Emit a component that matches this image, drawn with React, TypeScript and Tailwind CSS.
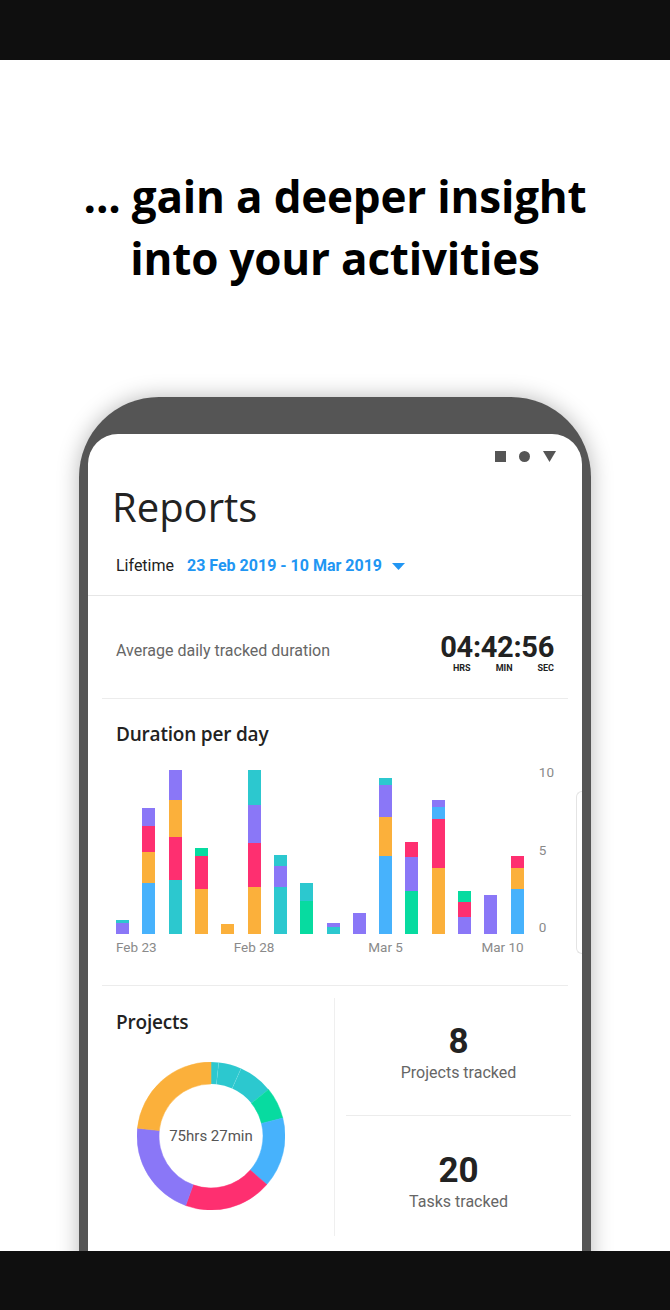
const colors: Record<string, string> = {
  p: "#8a77f7",
  t: "#2cc8cf",
  b: "#47b2fc",
  o: "#fbb03b",
  k: "#fe2f70",
  g: "#07dba0",
};

// each bar: segments from bottom to top, heights in px
const bars: [string, number][][] = [
  [["p", 11], ["t", 3]],
  [["b", 51], ["o", 31], ["k", 26], ["p", 18]],
  [["t", 54], ["k", 43], ["o", 37], ["p", 30]],
  [["o", 45], ["k", 33], ["g", 8]],
  [["o", 10]],
  [["o", 47], ["k", 44], ["p", 38], ["t", 35]],
  [["t", 47], ["p", 21], ["t", 11]],
  [["g", 33], ["t", 18]],
  [["t", 7], ["p", 4]],
  [["p", 21]],
  [["b", 78], ["o", 39], ["p", 32], ["t", 7]],
  [["g", 43], ["p", 34], ["k", 15]],
  [["o", 66], ["k", 49], ["b", 12], ["p", 7]],
  [["p", 17], ["k", 15], ["g", 11]],
  [["p", 39]],
  [["b", 45], ["o", 21], ["k", 12]],
];

const labels: Record<number, { text: string; align: string }> = {
  0: { text: "Feb 23", align: "justify-start" },
  5: { text: "Feb 28", align: "justify-center" },
  10: { text: "Mar 5", align: "justify-center" },
  15: { text: "Mar 10", align: "justify-end" },
};

const slices: [number, number, string][] = [
  [0, 6, "t"],
  [6, 24, "t"],
  [24, 51, "t"],
  [51, 76, "g"],
  [76, 131, "b"],
  [131, 200, "k"],
  [200, 276, "p"],
  [276, 360, "o"],
];

function arc(a0: number, a1: number) {
  const cx = 74, cy = 74, R = 74, r = 52;
  const pt = (rad: number, a: number) => {
    const t = (a * Math.PI) / 180;
    return `${(cx + rad * Math.sin(t)).toFixed(2)} ${(cy - rad * Math.cos(t)).toFixed(2)}`;
  };
  const large = a1 - a0 > 180 ? 1 : 0;
  return `M ${pt(R, a0)} A ${R} ${R} 0 ${large} 1 ${pt(R, a1)} L ${pt(r, a1)} A ${r} ${r} 0 ${large} 0 ${pt(r, a0)} Z`;
}

function Donut() {
  return (
    <div className="relative w-[148px] h-[148px]">
      <svg width="148" height="148" viewBox="0 0 148 148">
        {slices.map(([a0, a1, c], i) => (
          <path key={i} d={arc(a0, a1)} fill={colors[c]} stroke={c === "t" ? "#ffffff" : colors[c]} strokeOpacity={c === "t" ? 0.15 : 1} strokeWidth="0.5" />
        ))}
      </svg>
      <div className="absolute inset-0 flex items-center justify-center text-[15px] text-[#555] font-['Roboto',sans-serif]">
        75hrs 27min
      </div>
    </div>
  );
}

export default function App() {
  return (
    <div className="w-[670px] h-[1310px] bg-white flex flex-col overflow-hidden font-['Roboto',sans-serif]">
      <div className="h-[60px] bg-[#0f0f0f] shrink-0" />

      <div className="flex-1 overflow-hidden">
        <h1 className="mt-[105px] text-center text-[44px] leading-[62px] font-bold text-black font-['Open_Sans',sans-serif] tracking-[-0.2px]">
          ... gain a deeper insight
          <br />
          into your activities
        </h1>

        <div className="mx-auto mt-[108px] w-[512px] h-[900px] bg-[#555555] rounded-t-[80px] px-[9px] pt-[37px] shadow-[0_0_22px_rgba(0,0,0,0.28)]">
          <div className="bg-white rounded-t-[30px] h-full">
            {/* status bar */}
            <div className="flex justify-end items-center gap-[13px] pt-[17px] pr-[26px]">
              <div className="w-[11px] h-[11px] bg-[#555]" />
              <div className="w-[11px] h-[11px] rounded-full bg-[#555]" />
              <svg width="13" height="11" viewBox="0 0 13 11">
                <path d="M0 0 H13 L6.5 11 Z" fill="#555" />
              </svg>
            </div>

            <div className="px-[28px]">
              <div className="mt-[20px] -ml-[4px] text-[40px] leading-[50px] text-[#222] font-['Open_Sans',sans-serif]">
                Reports
              </div>
              <div className="mt-[24px] flex items-center h-[20px] text-[16px]">
                <span className="text-[#222]">Lifetime</span>
                <span className="ml-[13px] font-bold text-[#2196f3]">23 Feb 2019 - 10 Mar 2019</span>
                <svg className="ml-[10px]" width="13" height="7" viewBox="0 0 13 7">
                  <path d="M0 0 H13 L6.5 7 Z" fill="#2196f3" />
                </svg>
              </div>
            </div>

            <div className="mt-[19px] h-px bg-[#e6e6e6]" />

            {/* average */}
            <div className="mx-[14px] h-[103px] flex items-center justify-between px-[14px] pt-[8px] border-b border-[#ececec]">
              <span className="text-[16px] text-[#666]">Average daily tracked duration</span>
              <div className="flex flex-col items-end pt-[6px]">
                <span className="text-[29px] leading-[26px] font-bold text-[#222] tracking-[-0.3px]">04:42:56</span>
                <div className="flex justify-between w-[101px] text-[9px] leading-[12px] font-bold text-[#222] mt-[2px]">
                  <span>HRS</span>
                  <span>MIN</span>
                  <span>SEC</span>
                </div>
              </div>
            </div>

            {/* duration per day */}
            <div className="relative mx-[14px] px-[14px] pt-[22px] pb-[30px] border-b border-[#ececec]">
              <div className="text-[19px] leading-[26px] font-semibold text-[#222] font-['Open_Sans',sans-serif] tracking-[-0.2px]">
                Duration per day
              </div>
              <div className="mt-[14px] flex items-start">
                <div className="w-[409px]">
                  <div className="h-[173px] flex items-end justify-between">
                    {bars.map((segs, i) => (
                      <div key={i} className="w-[13px] flex flex-col-reverse">
                        {segs.map(([c, h], j) => (
                          <div key={j} style={{ height: h, background: colors[c] }} />
                        ))}
                      </div>
                    ))}
                  </div>
                  <div className="flex justify-between mt-[5px] text-[13.5px] leading-[16px] text-[#8a8a8a]">
                    {bars.map((_, i) => (
                      <div key={i} className={`w-[13px] flex ${labels[i] ? labels[i].align : "justify-center"}`}>
                        {labels[i] && <span className="whitespace-nowrap">{labels[i].text}</span>}
                      </div>
                    ))}
                  </div>
                </div>
                <div className="ml-[15px] mt-[3px] h-[171px] flex flex-col justify-between text-[13.5px] leading-[16px] text-[#8a8a8a]">
                  <span>10</span>
                  <span>5</span>
                  <span>0</span>
                </div>
              </div>
              <div className="absolute right-[-14px] top-[92px] w-[6px] h-[163px] border border-r-0 border-[#e4e4e4] rounded-l-[8px]" />
            </div>

            {/* projects */}
            <div className="mt-[12px] flex">
              <div className="w-[247px] h-[238px] border-r border-[#efefef] pl-[28px] pt-[11px]">
                <div className="text-[19px] leading-[26px] font-semibold text-[#222] font-['Open_Sans',sans-serif] tracking-[-0.2px]">
                  Projects
                </div>
                <div className="mt-[27px] flex justify-center pr-[28px]">
                  <Donut />
                </div>
              </div>
              <div className="flex-1 flex flex-col">
                <div className="h-[118px] pt-[24px] flex flex-col items-center mx-[11px] border-b border-[#ececec]">
                  <span className="text-[35px] leading-[40px] font-bold text-[#222]">8</span>
                  <span className="mt-[1px] text-[16px] leading-[20px] text-[#666]">Projects tracked</span>
                </div>
                <div className="pt-[35px] flex flex-col items-center">
                  <span className="text-[35px] leading-[40px] font-bold text-[#222]">20</span>
                  <span className="mt-[1px] text-[16px] leading-[20px] text-[#666]">Tasks tracked</span>
                </div>
              </div>
            </div>
          </div>
        </div>
      </div>

      <div className="h-[59px] bg-[#0f0f0f] shrink-0" />
    </div>
  );
}
